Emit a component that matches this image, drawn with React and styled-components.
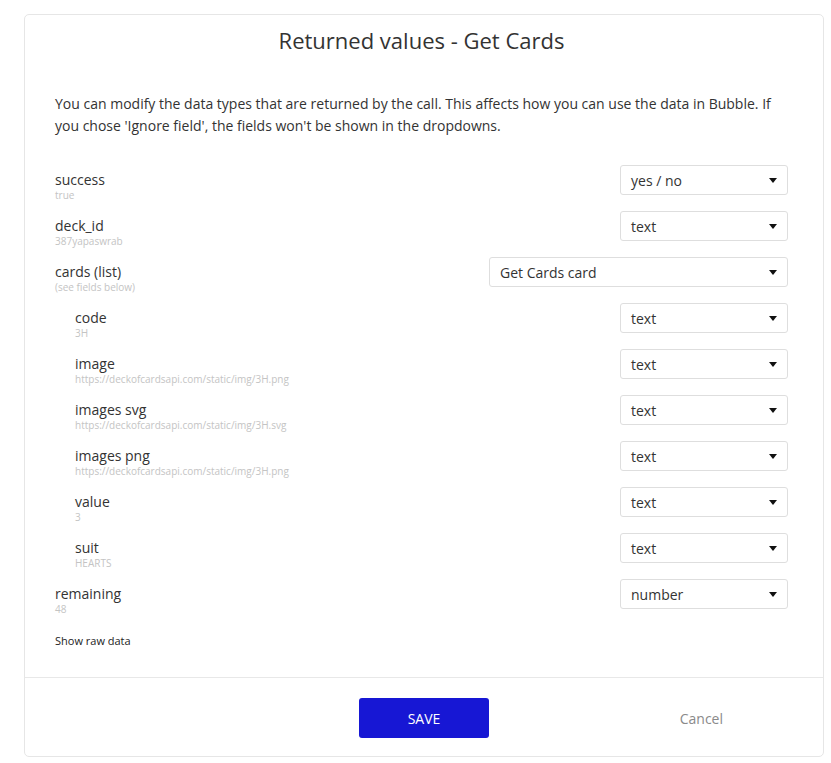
import React from "react";
import styled, { createGlobalStyle } from "styled-components";

const GlobalStyle = createGlobalStyle`
  html, body {
    margin: 0;
    padding: 0;
    background: #ffffff;
    font-family: "Open Sans", "Liberation Sans", sans-serif;
  }
`;

const Page = styled.div`
  width: 831px;
  height: 763px;
  padding: 14px 0 0 24px;
  box-sizing: border-box;
  overflow: hidden;
`;

const Modal = styled.div`
  width: 800px;
  height: 743px;
  box-sizing: border-box;
  border: 1px solid #e6e6e6;
  border-radius: 5px;
  background: #fff;
  display: flex;
  flex-direction: column;
`;

const Body = styled.div`
  flex: 1;
  padding: 10px 35px 0 30px;
`;

const Title = styled.div`
  font-size: 22px;
  line-height: 30px;
  color: #333;
  text-align: center;
  margin-bottom: 38px;
`;

const Description = styled.p`
  margin: 0 0 28px;
  font-size: 14px;
  line-height: 22px;
  color: #333;
`;

const Row = styled.div`
  display: flex;
  justify-content: space-between;
  align-items: flex-start;
  height: 30px;
  margin-bottom: 16px;
`;

const FieldInfo = styled.div`
  margin-top: 5px;
  padding-left: ${(p) => (p.nested ? "20px" : "0")};
`;

const FieldName = styled.div`
  font-size: 14px;
  line-height: 20px;
  color: #333;
`;

const FieldSample = styled.div`
  font-size: 10px;
  line-height: 11px;
  color: #c4c4c4;
`;

const Select = styled.div`
  width: ${(p) => (p.wide ? "299px" : "168px")};
  height: 30px;
  box-sizing: border-box;
  border: 1px solid #dedede;
  border-radius: 3px;
  display: flex;
  align-items: center;
  justify-content: space-between;
  padding: 0 10px 0 10px;
  font-size: 14px;
  color: #333;
`;

const Caret = styled.span`
  width: 0;
  height: 0;
  border-left: 4.5px solid transparent;
  border-right: 4.5px solid transparent;
  border-top: 5px solid #111;
`;

const RawLink = styled.div`
  margin-top: 25px;
  font-size: 11px;
  line-height: 14px;
  color: #222;
`;

const Footer = styled.div`
  border-top: 1px solid #e8e8e8;
  height: 79px;
  box-sizing: border-box;
  padding-top: 20px;
  display: grid;
  grid-template-columns: 1fr 130px 1fr;
`;

const SaveButton = styled.button`
  grid-column: 2;
  height: 40px;
  border: none;
  border-radius: 3px;
  background: #1717d4;
  color: #fff;
  font-family: inherit;
  font-size: 14px;
`;

const Cancel = styled.div`
  grid-column: 3;
  justify-self: end;
  margin: 11px 100px 0 0;
  font-size: 14px;
  line-height: 20px;
  color: #8a8a8a;
`;

const fields = [
  { name: "success", sample: "true", type: "yes / no" },
  { name: "deck_id", sample: "387yapaswrab", type: "text" },
  { name: "cards (list)", sample: "(see fields below)", type: "Get Cards card", wide: true },
  { name: "code", sample: "3H", type: "text", nested: true },
  { name: "image", sample: "https://deckofcardsapi.com/static/img/3H.png", type: "text", nested: true },
  { name: "images svg", sample: "https://deckofcardsapi.com/static/img/3H.svg", type: "text", nested: true },
  { name: "images png", sample: "https://deckofcardsapi.com/static/img/3H.png", type: "text", nested: true },
  { name: "value", sample: "3", type: "text", nested: true },
  { name: "suit", sample: "HEARTS", type: "text", nested: true },
  { name: "remaining", sample: "48", type: "number" },
];

const App = () => {
  return (
    <Page>
      <GlobalStyle />
      <Modal>
        <Body>
          <Title>Returned values - Get Cards</Title>
          <Description>
            You can modify the data types that are returned by the call. This affects how you can use the
            data in Bubble. If you chose 'Ignore field', the fields won't be shown in the dropdowns.
          </Description>
          {fields.map((f) => (
            <Row key={f.name}>
              <FieldInfo nested={f.nested}>
                <FieldName>{f.name}</FieldName>
                <FieldSample>{f.sample}</FieldSample>
              </FieldInfo>
              <Select wide={f.wide}>
                {f.type}
                <Caret />
              </Select>
            </Row>
          ))}
          <RawLink>Show raw data</RawLink>
        </Body>
        <Footer>
          <SaveButton>SAVE</SaveButton>
          <Cancel>Cancel</Cancel>
        </Footer>
      </Modal>
    </Page>
  );
};

export default App;
